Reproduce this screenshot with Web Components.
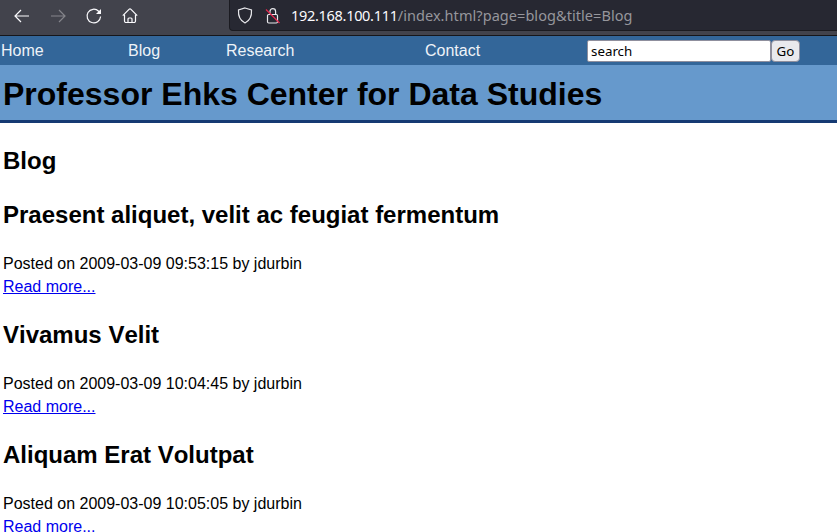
<!DOCTYPE html>
<html>
<head>
<meta charset="utf-8">
<title>Blog</title>
<style>
  html, body { margin: 0; padding: 0; background: #fff; height: 532px; overflow: hidden; }
  body { font-family: "Liberation Sans", Arial, sans-serif; }
</style>
</head>
<body>
<browser-bar url-host="192.168.100.111" url-rest="/index.html?page=blog&amp;title=Blog"></browser-bar>
<site-nav></site-nav>
<site-banner>Professor Ehks Center for Data Studies</site-banner>
<blog-page heading="Blog">
  <blog-post title="Praesent aliquet, velit ac feugiat fermentum" posted="2009-03-09 09:53:15" author="jdurbin"></blog-post>
  <blog-post title="Vivamus Velit" posted="2009-03-09 10:04:45" author="jdurbin"></blog-post>
  <blog-post title="Aliquam Erat Volutpat" posted="2009-03-09 10:05:05" author="jdurbin"></blog-post>
</blog-page>

<script>
(function() {
  class BrowserBar extends HTMLElement {
    constructor() {
      super();
      this.attachShadow({ mode: 'open' });
      this.shadowRoot.innerHTML = `
      <style>
      :host {
        display: flex;
        align-items: flex-start;
        height: 35px;
        background: #42434c;
        border-bottom: 1px solid #16161a;
      }
      .buttons {
        display: flex;
        align-items: center;
        height: 32px;
        padding-left: 13px;
        gap: 18px;
        width: 216px;
        box-sizing: border-box;
      }
      .buttons svg { width: 18px; height: 18px; fill: none; stroke: #fbfbfe; stroke-width: 1.2; flex: none; }
      .buttons svg.off { stroke: #85858b; }
      .url {
        margin-left: 13px;
        flex: 1;
        height: 31px;
        box-sizing: border-box;
        background: #272832;
        border: 1px solid #1b1b21;
        border-right: 0;
        border-top: 0;
        border-bottom-left-radius: 4px;
        display: flex;
        align-items: center;
        padding-left: 7px;
        font: 14.5px "Noto Sans", sans-serif;
        color: #fbfbfe;
      }
      .url svg { flex: none; fill: none; stroke: #e8e8ec; stroke-width: 1.2; }
      .lock { margin-left: 12px; margin-right: 11px; }
      .host { letter-spacing: -0.3px; }
      .rest { color: #96969c; letter-spacing: 0.06px; }
      </style>
      <div class="buttons">
        <svg viewBox="0 0 18 18"><path d="M16 9H2M8 3 2 9l6 6"/></svg>
        <svg class="off" viewBox="0 0 18 18"><path d="M2 9h14M10 3l6 6-6 6"/></svg>
        <svg viewBox="0 0 18 18"><path d="M15.600 9.500a6.800 6.800 0 1 1-2-5.300L15.500 6"/><path d="M16 2v5h-5z" fill="#fbfbfe" stroke="none"/></svg>
        <svg viewBox="0 0 18 18"><path d="M1.800 8.700 8 2.300a1.400 1.400 0 0 1 2 0l6.200 6.400"/><path d="M3.500 7.500v6.500a1.500 1.500 0 0 0 1.500 1.500h8a1.500 1.500 0 0 0 1.500-1.500V7.500"/><path d="M7 15.500v-3.500a1 1 0 0 1 1-1h2a1 1 0 0 1 1 1v3.500"/></svg>
      </div>
      <div class="url">
        <svg width="16" height="17" viewBox="0 0 16 17"><path d="M8 1 14.500 3c.4 6-1.500 10.500-6.500 13C3 13.500 1.100 9 1.500 3z"/></svg>
        <svg class="lock" width="15" height="17" viewBox="0 0 15 17"><rect x="2.500" y="7.500" width="10" height="8.500" rx="1.200"/><path d="M5 7.500V4.500a2.800 2.800 0 0 1 5.600 0v3"/><path d="M1 2.500 14.500 16" stroke="#e22850" stroke-width="1.300"/></svg>
        <span class="host">${this.getAttribute('url-host')}</span><span class="rest">${this.getAttribute('url-rest').replace(/&/g, '&amp;')}</span>
      </div>`;
    }
  }

  class SiteNav extends HTMLElement {
    constructor() {
      super();
      this.attachShadow({ mode: 'open' });
      this.shadowRoot.innerHTML = `
      <style>
      :host {
        display: flex;
        align-items: center;
        height: 29px;
        background: #336699;
        color: #eef3f8;
        font-size: 16px;
      }
      a { color: inherit; text-decoration: none; flex: none; }
      .home { width: 128px; padding-left: 1px; box-sizing: border-box; }
      .blog { width: 98px; }
      .research { width: 199px; }
      .contact { width: 162px; }
      form { display: flex; margin: 0; }
      input {
        width: 184px;
        height: 22px;
        box-sizing: border-box;
        border: 1px solid #8f8f9d;
        border-radius: 2px;
        padding: 1px 3px;
        font: 13.333px "Noto Sans", sans-serif;
        color: #000;
        background: #fff;
      }
      button {
        width: 29px;
        height: 22px;
        padding: 0;
        box-sizing: border-box;
        border: 1px solid #8f8f9d;
        border-radius: 4px;
        background: #e9e9ed;
        font: 13.333px "Noto Sans", sans-serif;
        color: #000;
      }
      </style>
      <a class="home" href="#">Home</a>
      <a class="blog" href="#">Blog</a>
      <a class="research" href="#">Research</a>
      <a class="contact" href="#">Contact</a>
      <form onsubmit="return false"><input type="text" value="search"><button>Go</button></form>`;
    }
  }

  class SiteBanner extends HTMLElement {
    constructor() {
      super();
      this.attachShadow({ mode: 'open' });
      this.shadowRoot.innerHTML = `
      <style>
      :host {
        display: block;
        background: #6699cc;
        border-bottom: 3px solid #153a73;
        height: 54px;
        padding: 1px 0 0 3px;
      }
      h1 { margin: 0; font-size: 32px; line-height: 57px; color: #000; }
      </style>
      <h1><slot></slot></h1>`;
    }
  }

  class BlogPage extends HTMLElement {
    constructor() {
      super();
      this.attachShadow({ mode: 'open' });
      this.shadowRoot.innerHTML = `
      <style>
      :host { display: block; padding: 0 3px; }
      h2 { margin: 24px 0 26.4px; font-size: 24px; line-height: 28px; color: #000; font-kerning: none; }
      </style>
      <h2>${this.getAttribute('heading')}</h2>
      <slot></slot>`;
    }
  }

  class BlogPost extends HTMLElement {
    constructor() {
      super();
      this.attachShadow({ mode: 'open' });
      this.shadowRoot.innerHTML = `
      <style>
      :host { display: block; font-size: 16px; color: #000; }
      h2 { margin: 22.67px 0 23px; font-size: 24px; line-height: 28px; font-kerning: none; }
      .meta { line-height: 23px; }
      a { color: #0000ee; display: block; line-height: 23px; width: fit-content; }
      </style>
      <h2>${this.getAttribute('title')}</h2>
      <div class="meta">Posted on ${this.getAttribute('posted')} by ${this.getAttribute('author')}</div>
      <a href="#">Read more...</a>`;
    }
  }

  customElements.define('browser-bar', BrowserBar);
  customElements.define('site-nav', SiteNav);
  customElements.define('site-banner', SiteBanner);
  customElements.define('blog-page', BlogPage);
  customElements.define('blog-post', BlogPost);
})();
</script>
</body>
</html>
